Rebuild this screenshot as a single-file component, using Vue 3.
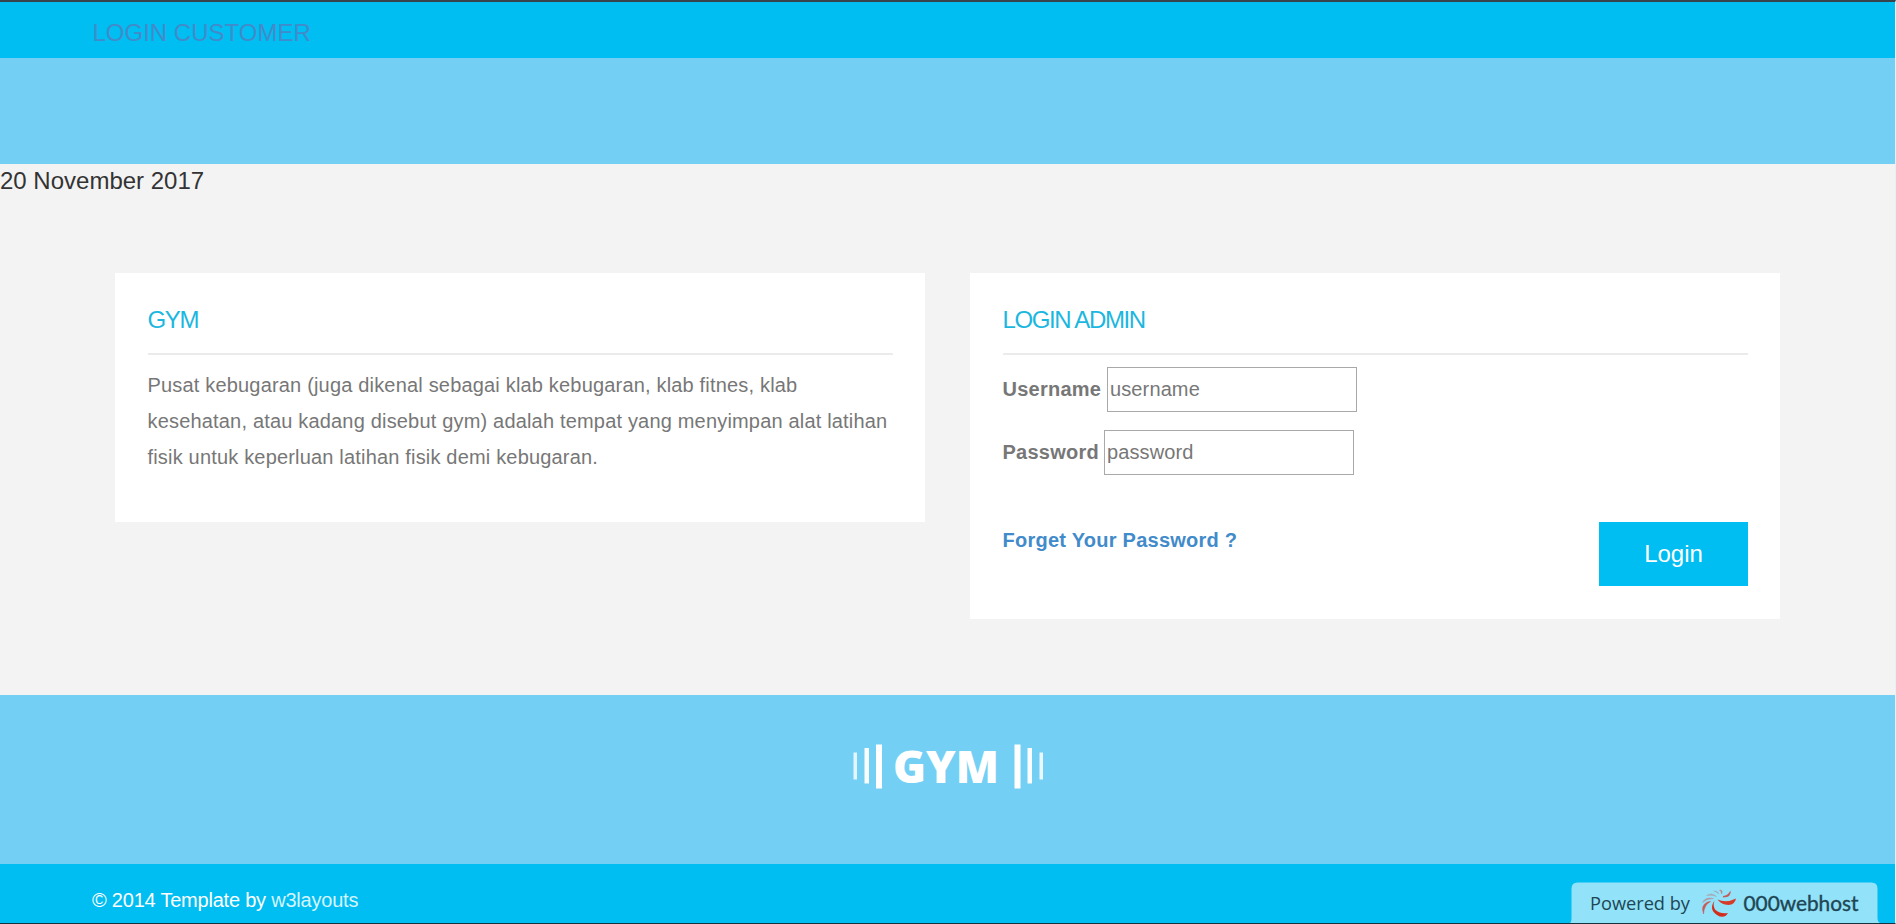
<script setup>
import { ref } from 'vue'

const username = ref('')
const password = ref('')
const bars = [
  { x: 853.5, y: 752.5, w: 3.5, h: 27, o: 0.8 },
  { x: 864.5, y: 748, w: 4.5, h: 35.5, o: 0.97 },
  { x: 876, y: 744.5, w: 6, h: 44, o: 1 },
  { x: 1014.5, y: 744.5, w: 6, h: 44, o: 1 },
  { x: 1027.5, y: 748, w: 4.5, h: 35.5, o: 0.97 },
  { x: 1039.5, y: 752.5, w: 3.5, h: 27, o: 0.85 }
]
</script>

<template>
  <div class="page">
    <header class="topbar"><a class="customer">LOGIN CUSTOMER</a></header>
    <div class="banner"></div>
    <main class="content">
      <div class="date">20 November 2017</div>
      <div class="cards">
        <section class="card">
          <h3>GYM</h3>
          <p>Pusat kebugaran (juga dikenal sebagai klab kebugaran, klab fitnes, klab kesehatan, atau kadang disebut gym) adalah tempat yang menyimpan alat latihan fisik untuk keperluan latihan fisik demi kebugaran.</p>
        </section>
        <section class="card">
          <h3>LOGIN ADMIN</h3>
          <form @submit.prevent>
            <div class="field user"><label for="user">Username</label><input id="user" v-model="username" type="text" placeholder="username"></div>
            <div class="field pass"><label for="pass">Password</label><input id="pass" v-model="password" type="password" placeholder="password"></div>
            <div class="actions">
              <a class="forget">Forget Your Password ?</a>
              <button type="submit">Login</button>
            </div>
          </form>
        </section>
      </div>
    </main>
    <div class="brand">
      <svg width="200" height="60" viewBox="848 736 200 60">
        <rect v-for="b in bars" :key="b.x" :x="b.x" :y="b.y" :width="b.w" :height="b.h" :opacity="b.o" fill="#fff" />
        <text x="893" y="782.6" class="brand-text" textLength="106" lengthAdjust="spacingAndGlyphs">GYM</text>
      </svg>
    </div>
    <footer class="bottom">
      <p>© 2014 Template by <a>w3layouts</a></p>
      <svg class="host" width="310" height="41" viewBox="1570 882 310 41">
        <path d="M1570 923Q1571.500 922 1571.500 918V888.500Q1571.500 882.500 1577.500 882.500H1871.500Q1877.500 882.500 1877.500 888.500V918Q1877.500 922 1880 923Z" fill="#92e2f9" />
        <text x="1590" y="910.300" class="powered" textLength="100" lengthAdjust="spacingAndGlyphs">Powered by</text>
        <g stroke-width=".5" stroke-linejoin="round">
          <path d="M1703.500 914Q1700.500 905 1707.500 902L1710.500 901.500Q1704 905 1703.500 914Z" fill="#c95a58" stroke="#c95a58" />
          <path d="M1702.500 902.500Q1705.500 896.500 1713.500 898.500Q1706.500 898.500 1702.500 902.500Z" fill="#b98f9b" stroke="#b98f9b" />
          <path d="M1706.500 895.500Q1712 892 1716.500 896.500Q1712 894.500 1706.500 895.500Z" fill="#a6a6b3" stroke="#a6a6b3" />
          <path d="M1713 891Q1718 890 1719 894.500Q1717 892 1713 891Z" fill="#9aabb8" />
          <path d="M1719.500 890Q1723.500 890 1721.500 894Q1722 891.500 1719.500 890Z" fill="#b98083" stroke="#b98083" />
          <path d="M1723 896Q1728 895.500 1730.500 890.500Q1732 897 1723 897.500Z" fill="#c65a58" />
          <path d="M1717.500 899.500Q1726 903.500 1736 898.500Q1734.500 906.500 1725 904.500Q1720.500 903.500 1717.500 899.500Z" fill="#d63a28" />
          <path d="M1714.500 900.500Q1708.500 909.500 1717 915Q1724 919.500 1728 913Q1719 914 1715 909.500Q1712.500 905.500 1714.500 900.500Z" fill="#d22e1d" />
        </g>
        <text x="1743.500" y="910.500" class="host-name" textLength="115" lengthAdjust="spacingAndGlyphs">000webhost</text>
      </svg>
    </footer>
  </div>
</template>

<style>
body { margin: 0; overflow: hidden; background: #f3f3f3; }
</style>

<style scoped>
* { box-sizing: border-box; }
.page {
  width: 1896px;
  height: 924px;
  display: flex;
  flex-direction: column;
  border-top: 2px solid #37444b;
  border-right: 1px solid #e4f1f6;
  border-bottom: 1px solid #15333f;
  font-family: "Liberation Sans", Arial, sans-serif;
  font-size: 20px;
  color: #777;
  background: #f3f3f3;
}
.topbar { height: 56px; background: #00bdf2; padding: 13px 0 0 92.5px; }
.customer { display: block; font-size: 24px; line-height: 36px; color: #428bca; }
.banner { height: 106px; background: #74cff4; }
.content { height: 531px; }
.date { font-size: 24px; line-height: 34px; height: 109px; color: #333; }
.cards { display: flex; align-items: flex-start; gap: 45px; padding-left: 115px; }
.card { width: 810px; height: 249px; background: #fff; padding: 32px 32.5px 0; }
.card + .card { height: 346px; padding-right: 32px; }
h3 {
  margin: 0;
  height: 50px;
  border-bottom: 2px solid #ebebeb;
  font-weight: 400;
  font-size: 24px;
  line-height: 30px;
  letter-spacing: -1.37px;
  color: #1cb7df;
}
p { margin: 0; }
.card p { padding-top: 12px; line-height: 36px; letter-spacing: .18px; }
form { padding-top: 12px; }
.field { display: flex; align-items: center; height: 45px; margin-bottom: 18px; }
.field label { font-weight: 700; letter-spacing: .25px; width: 104.5px; }
.pass label { width: 101.5px; }
.field input {
  width: 250px;
  height: 45px;
  margin: 0;
  padding: 1px 2px;
  border: 1px solid #a9a9a9;
  border-radius: 0;
  background: #fff;
  font: 20px "Liberation Sans", Arial, sans-serif;
  letter-spacing: .12px;
}
.field input::placeholder { color: #777; }
.actions { display: flex; justify-content: space-between; align-items: flex-start; padding-top: 29px; }
.forget { color: #428bca; font-weight: 700; letter-spacing: .25px; line-height: 36px; }
button {
  width: 149px;
  height: 64px;
  border: 0;
  padding: 0;
  background: #00bdf2;
  color: #fff;
  font: 24px "Liberation Sans", Arial, sans-serif;
}
.brand { height: 169px; background: #74cff4; padding: 41px 0 0 848px; }
.brand svg { display: block; }
.brand-text { font: 800 43.8px "Open Sans", sans-serif; fill: #fff; }
.bottom { position: relative; height: 59px; background: #00bdf2; padding: 18px 0 0 92px; }
.bottom p { line-height: 36px; letter-spacing: -.22px; color: #fff; }
.bottom a { color: #d4f5ff; }
.host { position: absolute; right: 15px; bottom: 0; }
.powered { font: 18.5px "Open Sans", sans-serif; fill: #204653; }
.host-name { font: 400 20.5px Lato, sans-serif; fill: #204653; stroke: #204653; stroke-width: .35px; }
</style>
